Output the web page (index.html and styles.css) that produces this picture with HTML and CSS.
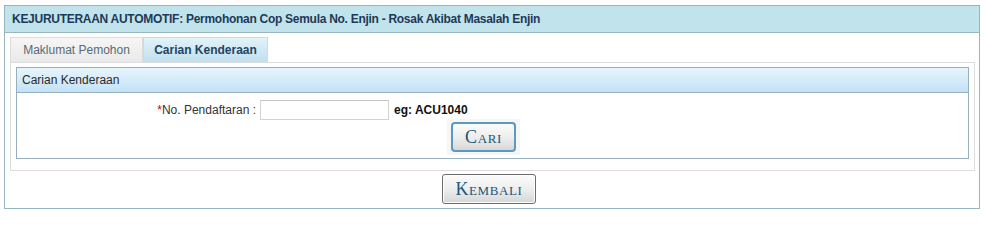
FILE: index.html
```html
<!DOCTYPE html>
<html>
<head>
<meta charset="utf-8">
<link rel="stylesheet" href="styles.css">
</head>
<body>
<div class="panel">
  <div class="panel-head">KEJURUTERAAN AUTOMOTIF: Permohonan Cop Semula No. Enjin - Rosak Akibat Masalah Enjin</div>
  <div class="panel-body">
    <div class="tabs">
      <div class="tab">Maklumat Pemohon</div>
      <div class="tab active">Carian Kenderaan</div>
    </div>
    <div class="tab-panel">
      <div class="box">
        <div class="box-head">Carian Kenderaan</div>
        <div class="box-body">
          <div class="row">
            <div class="label"><span class="req">*</span>No. Pendaftaran :</div>
            <input class="field" type="text">
            <div class="hint">eg: ACU1040</div>
          </div>
          <div class="btn-row">
            <div class="btn-wrap"><button class="btn btn-blue">Cari</button></div>
          </div>
        </div>
      </div>
    </div>
    <div class="footer">
      <button class="btn btn-gray">Kembali</button>
    </div>
  </div>
</div>
</body>
</html>
```
FILE: styles.css
```css
html, body { margin: 0; padding: 0; background: #fff; }
body {
  padding: 5px 5px 0 4px;
  font-family: "Liberation Sans", Arial, sans-serif;
  font-size: 12px;
  color: #222;
}
.panel {
  width: 976px;
  border: 1px solid #98b4bd;
  box-sizing: border-box;
  height: 204px;
}
.panel-head {
  height: 26px;
  line-height: 26px;
  background: #c1e3eb;
  border-bottom: 1px solid #9ab7c0;
  padding-left: 7px;
  font-weight: bold;
  color: #1e3957;
  letter-spacing: -0.28px;
}
.panel-body {
  padding: 4px 4px 0 5px;
}
.tabs {
  display: flex;
  height: 25px;
}
.tab {
  width: 133px;
  height: 25px;
  box-sizing: border-box;
  border: 1px solid #dcdcdc;
  border-bottom: none;
  background: linear-gradient(#f6f6f6, #e9e9e9);
  color: #5a6a72;
  text-align: center;
  line-height: 25px;
}
.tab.active {
  width: 125px;
  background: linear-gradient(#e2f2f8, #bfe0ee);
  border-color: #c5dde6;
  color: #234460;
  font-weight: bold;
}
.tab-panel {
  border: 1px solid #dcdcdc;
  padding: 4px 5px 12px 5px;
  height: 109px;
  box-sizing: border-box;
}
.box {
  border: 1px solid #98b0bd;
  height: 92px;
  box-sizing: border-box;
}
.box-head {
  height: 24px;
  line-height: 24px;
  padding-left: 5px;
  background: linear-gradient(#e7f5fc, #c3e2f6);
  border-bottom: 1px solid #98b0bd;
  color: #2a2a2a;
}
.box-body {
  padding-top: 6px;
}
.row {
  display: flex;
  align-items: center;
  height: 21px;
}
.label {
  width: 239px;
  text-align: right;
  padding-right: 4px;
  color: #333;
}
.req { color: #c00; }
.field {
  width: 129px;
  height: 20px;
  box-sizing: border-box;
  border: 1px solid #d2d2d2;
  border-top-color: #c4c4c4;
  margin: 0;
  padding: 0 3px;
}
.hint {
  margin-left: 5px;
  font-weight: bold;
  color: #111;
}
.btn-row {
  display: flex;
  padding-left: 430px;
  padding-top: 2px;
}
.btn-wrap {
  background: #f6f6f4;
  padding: 3px 4px;
  margin-top: -3px;
}
.btn {
  font-family: "Liberation Serif", "Times New Roman", serif;
  font-variant: small-caps;
  color: #1d5676;
  font-size: 18px;
  letter-spacing: 0.6px;
  cursor: pointer;
  margin: 0;
  padding: 0;
  line-height: 1;
}
.btn-blue {
  width: 65px;
  height: 30px;
  border: 2px solid #5a9ac0;
  border-radius: 4px;
  background: linear-gradient(#fbfbfb 0%, #eeeeee 50%, #d8d8d8 100%);
}
.footer {
  display: flex;
  padding-left: 432px;
  padding-top: 3px;
}
.btn-gray {
  width: 94px;
  height: 30px;
  border: 1px solid #6b6b6b;
  border-radius: 3px;
  background: linear-gradient(#fbfbfb 0%, #eeeeee 50%, #d6d6d6 100%);
  box-shadow: inset 0 0 0 1px #fff;
}
```
